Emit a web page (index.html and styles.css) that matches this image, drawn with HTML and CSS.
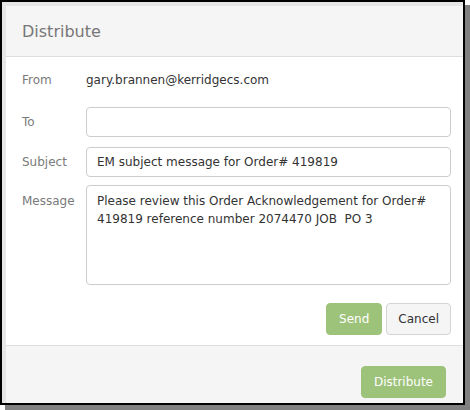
FILE: index.html
```html
<!DOCTYPE html>
<html lang="en">
<head>
    <meta charset="UTF-8">
    <title>Distribute</title>
    <link rel="stylesheet" href="styles.css">
</head>
<body>
    <div class="frame">
        <div class="modal">
            <div class="modal-header">
                <h4 class="modal-title">Distribute</h4>
            </div>
            <div class="modal-body">
                <div class="row row-from">
                    <label class="label">From</label>
                    <span class="value">gary.brannen@kerridgecs.com</span>
                </div>
                <div class="row row-to">
                    <label class="label" for="to">To</label>
                    <input type="text" id="to" class="field">
                </div>
                <div class="row row-subject">
                    <label class="label" for="subject">Subject</label>
                    <input type="text" id="subject" class="field" value="EM subject message for Order# 419819">
                </div>
                <div class="row row-message">
                    <label class="label" for="message">Message</label>
                    <textarea id="message" class="field area">Please review this Order Acknowledgement for Order# 419819 reference number 2074470 JOB  PO 3</textarea>
                </div>
                <div class="actions">
                    <button class="btn btn-green">Send</button>
                    <button class="btn btn-plain">Cancel</button>
                </div>
            </div>
            <div class="modal-footer">
                <button class="btn btn-green">Distribute</button>
            </div>
        </div>
    </div>
</body>
</html>
```

FILE: styles.css
```css
body {
    margin: 0;
    min-height: 410px;
    background-color: white;
    font-family: "DejaVu Sans", Verdana, sans-serif;
    font-size: 12px;
    color: #333;
}
.frame {
    width: 461px;
    height: 401px;
    border: 2px solid black;
    box-shadow: 5px 5px 0 #808080;
    overflow: hidden;
}
.modal {
    height: 100%;
    box-sizing: border-box;
    border-top: 4px solid #e6e6e6;
    border-left: 4px solid #e6e6e6;
    display: flex;
    flex-direction: column;
}
.modal-header {
    background-color: #f5f5f5;
    height: 50px;
    border-bottom: 1px solid #dedede;
    display: flex;
    align-items: center;
    padding-left: 16px;
}
.modal-title {
    margin: 0;
    font-size: 16px;
    font-weight: normal;
    color: #777;
}
.modal-body {
    background-color: white;
    padding: 8px 12px 10px 16px;
    border-bottom: 1px solid #dedede;
}
.row {
    display: flex;
    align-items: center;
}
.row-from {
    height: 30px;
}
.row-to {
    margin-top: 12px;
}
.row-subject {
    margin-top: 10px;
}
.row-message {
    margin-top: 8px;
    align-items: flex-start;
}
.row-message .label {
    padding-top: 7px;
    line-height: 18px;
}
.label {
    width: 64px;
    flex: none;
    color: #7a7a7a;
}
.value {
    color: #333;
}
.field {
    flex: 1;
    height: 30px;
    box-sizing: border-box;
    border: 1px solid #ccc;
    border-radius: 4px;
    padding: 0 10px;
    font-family: "DejaVu Sans", Verdana, sans-serif;
    font-size: 12px;
    color: #333;
    background: white;
    outline: none;
}
.area {
    height: 100px;
    padding: 6px 10px;
    line-height: 18px;
    resize: none;
}
.actions {
    display: flex;
    justify-content: flex-end;
    gap: 4px;
    margin-top: 18px;
}
.btn {
    height: 32px;
    padding: 0 12px;
    border-radius: 4px;
    font-family: "DejaVu Sans", Verdana, sans-serif;
    font-size: 12px;
    cursor: pointer;
}
.btn-green {
    background-color: #9dc27a;
    border: 1px solid #9dc27a;
    color: white;
}
.btn-plain {
    background-color: #f5f5f5;
    border: 1px solid #d4d4d4;
    color: #333;
    padding: 0 11px;
}
.modal-footer {
    flex: 1;
    background-color: #f5f5f5;
    display: flex;
    justify-content: flex-end;
    align-items: flex-start;
    padding: 20px 17px 0 0;
}
```
